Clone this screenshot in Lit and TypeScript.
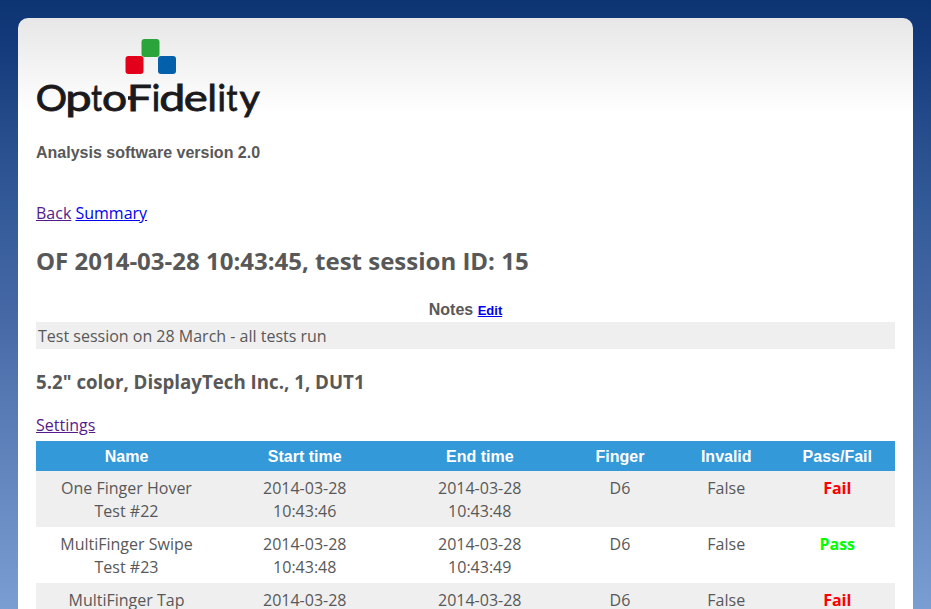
import { LitElement, html, css, svg } from "lit";
import { customElement } from "lit/decorators.js";

const ROWS = [
  { name: "One Finger Hover", test: "Test #22", start: "10:43:46", end: "10:43:48", pass: false },
  { name: "MultiFinger Swipe", test: "Test #23", start: "10:43:48", end: "10:43:49", pass: true },
  { name: "MultiFinger Tap", test: "Test #24", start: "10:43:49", end: "10:43:50", pass: false },
];
const DATE = "2014-03-28";

const SIZE = 37.5;
// Wordmark letters: glyph, left and right edge of the drawn letter, side bounds of the glyph in em
const LETTERS: [string, number, number, number, number][] = [
  ["O", 37.4, 64.8, 0.045, 0.745],
  ["p", 68.8, 90, 0.073, 0.523],
  ["t", 91.8, 101.6, 0.017, 0.346],
  ["o", 103.7, 125.3, 0.04, 0.527],
  ["F", 131.2, 150.8, 0.094, 0.541],
  ["i", 154, 157.8, 0.066, 0.174],
  ["d", 160.9, 181.8, 0.037, 0.487],
  ["e", 185.6, 206, 0.04, 0.489],
  ["l", 210.5, 213.9, 0.077, 0.163],
  ["i", 219.8, 223.6, 0.066, 0.174],
  ["t", 227, 237, 0.017, 0.346],
  ["y", 239.8, 259, 0.01, 0.497],
];

@customElement("app-logo")
export class AppLogo extends LitElement {
  static styles = css`
    :host { display: block; width: 226px; height: 84px; }
    svg { display: block; }
    .word { font: 400 37.5px Lato, sans-serif; fill: #1b191c; stroke: #1b191c; stroke-width: 0.9; }
    .bar { fill: #1b191c; }
    .green { fill: #2ca43c; }
    .red { fill: #e3001b; }
    .blue { fill: #0560ac; }
  `;
  render() {
    return html`<svg width="226" height="84" viewBox="36 38 226 84" role="img" aria-label="OptoFidelity">
      <rect class="green" x="141.5" y="39" width="18" height="18" rx="3" />
      <rect class="red" x="125.5" y="56" width="18" height="18" rx="3" />
      <rect class="blue" x="158" y="56" width="18" height="18" rx="3" />
      <rect class="bar" x="128" y="96.2" width="6" height="3.6" />
      ${LETTERS.map(([c, l, r, a, b]) => {
        const k = (r - l) / ((b - a) * SIZE);
        return svg`<text class="word" transform="translate(${l - a * SIZE * k} 111) scale(${k} 1)">${c}</text>`;
      })}
    </svg>`;
  }
}

@customElement("app-root")
export class AppRoot extends LitElement {
  static styles = css`
    :host {
      display: block; height: 609px; overflow: hidden; box-sizing: border-box; padding: 18px 18px 0;
      background: linear-gradient(#0d3472 0, #13397a 40px, #264b8a 125px, #335a98 205px, #4568a5 310px, #5c7eb8 430px, #7a9ed2 609px);
      font: 16px/23px "Open Sans", sans-serif; color: #585858;
    }
    .panel {
      box-sizing: border-box; height: 620px; padding: 20px 18px 0; border-radius: 10px 10px 0 0;
      background: linear-gradient(#e7e7e7, #fff 96px) #fff;
    }
    .version { margin: 21px 0 0; font: bold 16px/19px "Liberation Sans", sans-serif; }
    .links { margin-top: 40px; }
    a { color: #00e; text-decoration: underline; }
    a.visited { color: #551a8b; }
    h2 { margin: 19px 0 0; font-size: 24px; line-height: 34px; }
    .notes { margin-top: 20px; height: 24px; text-align: center; font: bold 16px/24px "Liberation Sans", sans-serif; }
    .notes a { font-size: 13px; }
    .note { background: #efefef; height: 27px; line-height: 29px; padding-left: 2px; }
    h3 { margin: 19px 0 0; font-size: 18.72px; line-height: 27px; }
    .settings { margin-top: 19px; }
    .row {
      display: grid; grid-template-columns: 181px 175.5px 174.5px 106px 106.5px 115.5px;
      height: 56px; box-sizing: border-box; padding-top: 6px; text-align: center;
    }
    .row.odd { background: #efefef; }
    .row.head {
      margin-top: 4px; height: 30px; padding: 0; background: #3399d9; color: #fff;
      font: bold 16px/32px "Liberation Sans", sans-serif;
    }
    .fail { color: #f00; font-weight: bold; }
    .pass { color: #0f0; font-weight: bold; }
  `;
  render() {
    return html`<div class="panel">
      <app-logo></app-logo>
      <p class="version">Analysis software version 2.0</p>
      <nav class="links"><a class="visited">Back</a> <a>Summary</a></nav>
      <h2>OF 2014-03-28 10:43:45, test session ID: 15</h2>
      <div class="notes">Notes <a>Edit</a></div>
      <div class="note">Test session on 28 March - all tests run</div>
      <h3>5.2" color, DisplayTech Inc., 1, DUT1</h3>
      <div class="settings"><a class="visited">Settings</a></div>
      <div class="row head">
        ${["Name", "Start time", "End time", "Finger", "Invalid", "Pass/Fail"].map((t) => html`<div>${t}</div>`)}
      </div>
      ${ROWS.map((r, i) => html`<div class="row ${i % 2 ? "" : "odd"}">
        <div>${r.name}<br />${r.test}</div>
        <div>${DATE}<br />${r.start}</div>
        <div>${DATE}<br />${r.end}</div>
        <div>D6</div>
        <div>False</div>
        <div class=${r.pass ? "pass" : "fail"}>${r.pass ? "Pass" : "Fail"}</div>
      </div>`)}
    </div>`;
  }
}
